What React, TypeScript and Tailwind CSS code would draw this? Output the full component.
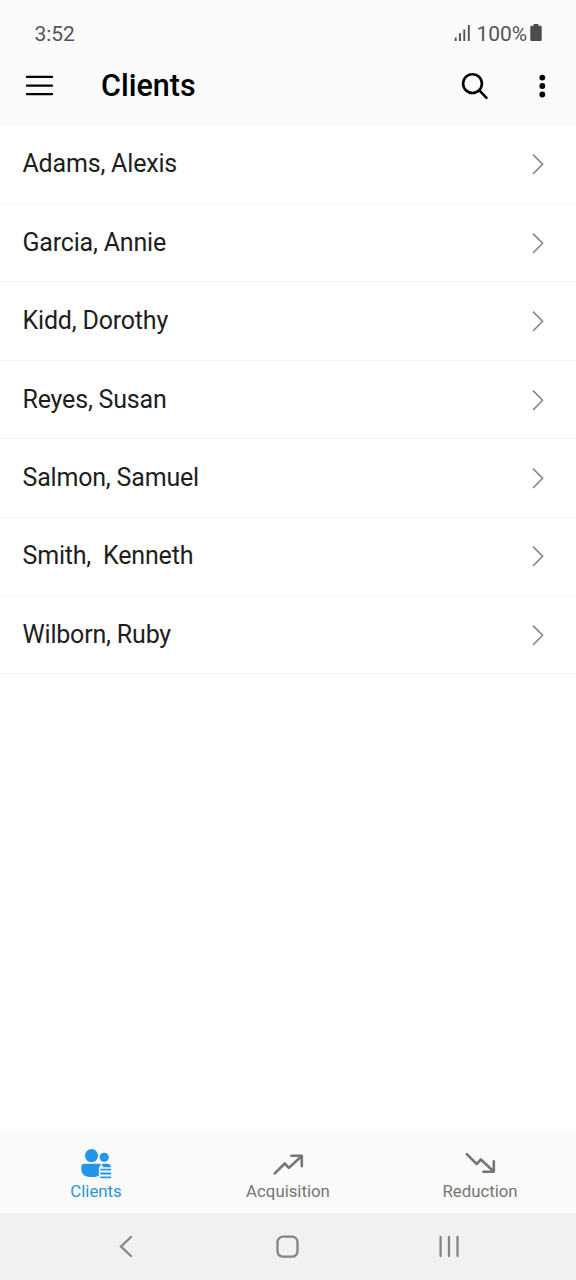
import { ReactNode } from "react";
import clsx from "clsx";

const clients = [
  "Adams, Alexis",
  "Garcia, Annie",
  "Kidd, Dorothy",
  "Reyes, Susan",
  "Salmon, Samuel",
  "Smith,  Kenneth",
  "Wilborn, Ruby",
];

function StatusBar() {
  return (
    <div className="flex h-12 items-end justify-between pl-[34.5px] pr-[34px] text-[21px] leading-[28px] text-[#555]">
      <span className="tracking-[-0.1px]">3:52</span>
      <div className="flex items-end">
        <svg width="17" height="29" viewBox="0 0 17 29" className="mr-[5px]">
          <path
            d="M1.7 18.500v3.500M6 14.300v7.700M10.300 10.600v11.400M14.800 6v16"
            stroke="#505050"
            strokeWidth="1.900"
          />
        </svg>
        <span className="tracking-[-0.05px]">100%</span>
        <svg width="12" height="29" viewBox="0 0 12 29" className="ml-[3px]">
          <path
            d="M3.600 5h4.800v1.700h2.100q1.200 0 1.200 1.200v12.800q0 1.200-1.200 1.200h-9q-1.200 0-1.200-1.200V7.900q0-1.200 1.200-1.200h2.100z"
            fill="#4c4c4c"
          />
        </svg>
      </div>
    </div>
  );
}

function AppBar() {
  return (
    <header className="flex h-[77px] items-center pb-[2px] pl-[25px] pr-[29px] text-black">
      <svg width="29" height="29" viewBox="0 0 29 29" fill="none">
        <path
          d="M2 5.900h25M2 14.600h25M2 23.100h25"
          stroke="currentColor"
          strokeWidth="2.400"
          strokeLinecap="round"
        />
      </svg>
      <h1 className="ml-[47px] flex-1 text-[30.5px] font-medium leading-9">
        Clients
      </h1>
      <svg width="30" height="30" viewBox="0 0 30 30" fill="none">
        <g stroke="currentColor" strokeWidth="2.600" strokeLinecap="round">
          <circle cx="12.500" cy="12.600" r="9.400" />
          <path d="m19.500 19.600 7 7.200" />
        </g>
      </svg>
      <svg width="10" height="30" viewBox="0 0 10 30" className="ml-[47px]">
        <g fill="currentColor">
          <circle cx="5.300" cy="6.600" r="2.900" />
          <circle cx="5.300" cy="15" r="2.900" />
          <circle cx="5.300" cy="23.500" r="2.900" />
        </g>
      </svg>
    </header>
  );
}

function ClientRow({ name }: { name: string }) {
  return (
    <li className="flex h-[78.4px] items-center justify-between border-b border-[#f5f5f5] pl-[22.5px] pr-[31.5px]">
      <span className="whitespace-pre text-[25px] leading-8 tracking-[-0.19px] text-[#1e1e1e]">
        {name}
      </span>
      <svg width="13" height="22" viewBox="0 0 13 22" fill="none">
        <path
          d="M1 1.600 10.600 11.300 1 21"
          stroke="#858585"
          strokeWidth="1.600"
        />
      </svg>
    </li>
  );
}

function ClientsIcon() {
  return (
    <svg width="32" height="32" viewBox="0 0 32 32" fill="#2496ea">
      <circle cx="11.500" cy="7.600" r="6.600" />
      <circle cx="24.200" cy="9.300" r="4.600" />
      <path d="M4.500 15.700h14c1.400 0 2.400.7 2.900 1.700-1.700.3-2.500 1.400-2.500 3v7.300c-2 .9-4.200 1.300-7.400 1.300C4.700 29 1.300 26 1.300 20.900v-2c0-2 1.200-3.200 3.200-3.200z" />
      <path d="M21.300 15.700h6.300c2 0 3.200 1.300 3.400 3.600h-8.200c0-1.400-.5-2.700-1.500-3.600z" />
      <path
        d="M20.300 21.700h10.800M20.300 25.500h10.800M20.300 29.300h10.800"
        stroke="#2496ea"
        strokeWidth="1.800"
      />
    </svg>
  );
}

function TrendIcon({ down }: { down?: boolean }) {
  return (
    <svg
      width="32"
      height="32"
      viewBox="0 0 32 32"
      fill="none"
      stroke="#757575"
      strokeWidth="2.600"
      strokeLinejoin="round"
      strokeLinecap="round"
    >
      {down ? (
        <path d="M2.800 6.200 12.700 16l4.200-4.500L29.600 23.500M19.400 23.700h10.400V13.300" />
      ) : (
        <path d="M2.800 25.300 12.700 15.500l4.200 4.400L29.600 8M19.400 7.800h10.400v10.400" />
      )}
    </svg>
  );
}

function Tab({
  label,
  active,
  children,
}: {
  label: string;
  active?: boolean;
  children: ReactNode;
}) {
  return (
    <button
      className={clsx(
        "flex flex-1 flex-col items-center pt-4 text-[16.8px] leading-[22px]",
        active ? "text-[#2b95d6]" : "text-[#757575]"
      )}
    >
      {children}
      <span>{label}</span>
    </button>
  );
}

function SystemNav() {
  return (
    <div className="flex h-[67.5px] items-center justify-between bg-[#f1f1f1] px-[115px]">
      <svg width="24" height="24" viewBox="0 0 24 24" fill="none">
        <path
          d="M16 3 6 12.500 16 22"
          stroke="#858585"
          strokeWidth="2.300"
          strokeLinecap="round"
        />
      </svg>
      <svg width="24" height="24" viewBox="0 0 24 24" fill="none">
        <rect
          x="1.500"
          y="2.700"
          width="20"
          height="20"
          rx="5.500"
          stroke="#858585"
          strokeWidth="2.300"
        />
      </svg>
      <svg width="24" height="24" viewBox="0 0 24 24" fill="none">
        <path
          d="M3.600 3v19M12 3v19M20.500 3v19"
          stroke="#858585"
          strokeWidth="2.300"
          strokeLinecap="round"
        />
      </svg>
    </div>
  );
}

export default function App() {
  return (
    <div className="flex h-[1280px] w-[576px] flex-col overflow-hidden bg-white font-['Roboto',sans-serif]">
      <div className="bg-[#fafafa]">
        <StatusBar />
        <AppBar />
      </div>
      <ul className="flex-1 pt-[0.7px]">
        {clients.map((name) => (
          <ClientRow key={name} name={name} />
        ))}
      </ul>
      <nav className="flex h-[80.5px] bg-[#fafafa]">
        <Tab label="Clients" active>
          <ClientsIcon />
        </Tab>
        <Tab label="Acquisition">
          <TrendIcon />
        </Tab>
        <Tab label="Reduction">
          <TrendIcon down />
        </Tab>
      </nav>
      <SystemNav />
    </div>
  );
}
